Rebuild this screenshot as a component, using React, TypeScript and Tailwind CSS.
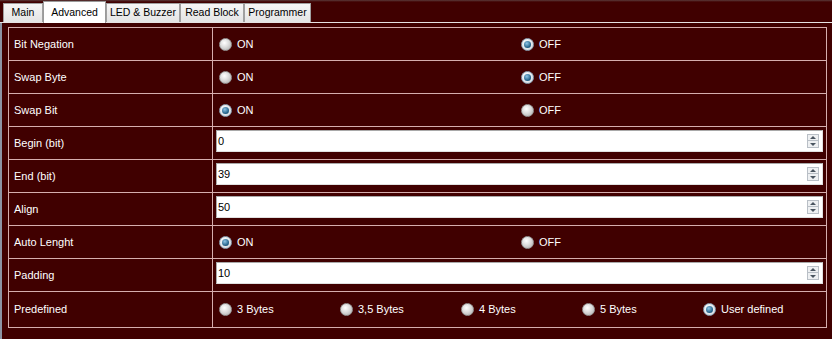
import React from 'react';

const tabs = [
  { name: 'Main', w: 'w-[40px]' },
  { name: 'Advanced', w: 'w-[63px]', active: true },
  { name: 'LED & Buzzer', w: 'w-[74px]' },
  { name: 'Read Block', w: 'w-[64px]' },
  { name: 'Programmer', w: 'w-[67px]' },
];

function Radio({ on }: { on?: boolean }) {
  if (on) {
    return (
      <span className="w-[13px] h-[13px] rounded-full shrink-0 flex items-center justify-center bg-[radial-gradient(circle_at_40%_35%,#ffffff,#c9d3dc)] border border-[#8ea2b4]">
        <span className="w-[7px] h-[7px] rounded-full bg-[radial-gradient(circle_at_40%_35%,#8cc4e6,#1b5a82_70%,#123e5c)]" />
      </span>
    );
  }
  return (
    <span className="w-[13px] h-[13px] rounded-full shrink-0 bg-[radial-gradient(circle_at_40%_35%,#ffffff,#dcdcdc_45%,#a9a9a9)] border border-[#9a9a9a]" />
  );
}

function Option({ label, on, w }: { label: string; on?: boolean; w: string }) {
  return (
    <div className={`flex items-center gap-[5px] ${w}`}>
      <Radio on={on} />
      <span className="text-white">{label}</span>
    </div>
  );
}

function Spin({ value }: { value: string }) {
  return (
    <div className="self-start mt-[3px] ml-[3px] w-[607px] h-[22px] bg-white border border-[#a9a9a9] border-r-[#e0e0e0] border-b-[#e0e0e0] flex items-center justify-between">
      <span className="pl-[1px] text-black">{value}</span>
      <div className="mr-[3px] flex flex-col">
        <div className="w-[12px] h-[7px] bg-[#eef0f2] border border-[#b9bfc6] flex items-center justify-center">
          <span className="w-0 h-0 border-l-[3px] border-r-[3px] border-b-[3px] border-l-transparent border-r-transparent border-b-[#4a5560]" />
        </div>
        <div className="w-[12px] h-[7px] bg-[#eef0f2] border border-[#b9bfc6] border-t-0 flex items-center justify-center">
          <span className="w-0 h-0 border-l-[3px] border-r-[3px] border-t-[3px] border-l-transparent border-r-transparent border-t-[#4a5560]" />
        </div>
      </div>
    </div>
  );
}

function OnOff({ on }: { on: boolean }) {
  return (
    <div className="flex items-center pl-[6px]">
      <Option label="ON" on={on} w="w-[302px]" />
      <Option label="OFF" on={!on} w="w-[302px]" />
    </div>
  );
}

const rows: { label: string; node: React.ReactNode; tall?: boolean }[] = [
  { label: 'Bit Negation', node: <OnOff on={false} /> },
  { label: 'Swap Byte', node: <OnOff on={false} /> },
  { label: 'Swap Bit', node: <OnOff on={true} /> },
  { label: 'Begin (bit)', node: <Spin value="0" /> },
  { label: 'End (bit)', node: <Spin value="39" /> },
  { label: 'Align', node: <Spin value="50" /> },
  { label: 'Auto Lenght', node: <OnOff on={true} /> },
  { label: 'Padding', node: <Spin value="10" /> },
  {
    label: 'Predefined',
    tall: true,
    node: (
      <div className="flex items-center pl-[6px]">
        <Option label="3 Bytes" w="w-[121px]" />
        <Option label="3,5 Bytes" w="w-[121px]" />
        <Option label="4 Bytes" w="w-[121px]" />
        <Option label="5 Bytes" w="w-[121px]" />
        <Option label="User defined" on w="w-[121px]" />
      </div>
    ),
  },
];

export default function App() {
  return (
    <div className="w-[832px] h-[339px] bg-[#400000] font-['Liberation_Sans',Arial,sans-serif] text-[11px] overflow-hidden flex flex-col">
      <div className="h-[23px] flex items-end pl-[3px] border-b border-[#e6e2e2] bg-[linear-gradient(#5a3a3a_0px,#400000_2px)] text-[10.5px]">
        {tabs.map((t) =>
          t.active ? (
            <div
              key={t.name}
              className={`${t.w} h-[22px] -mb-[1px] bg-white border border-b-0 border-[#9a9a9a] flex justify-center pt-[3px] text-black relative z-10`}
            >
              {t.name}
            </div>
          ) : (
            <div
              key={t.name}
              className={`${t.w} h-[19px] bg-[linear-gradient(#f6f6f6,#e4e4e4)] border border-b-0 border-[#a0a0a0] flex items-center justify-center text-black`}
            >
              {t.name}
            </div>
          )
        )}
      </div>
      <div className="flex-1 flex border-l-2 border-[#8c94a4] pl-[6px] pt-[4px]">
        <div className="w-[819px] self-start border-t border-l border-r border-[#d6aeae]">
          {rows.map((r) => (
            <div key={r.label} className={`flex border-b border-[#d6aeae] ${r.tall ? 'h-[36px]' : 'h-[33px]'}`}>
              <div className="w-[204px] shrink-0 border-r border-[#d6aeae] flex items-center pl-[5px] text-white">
                {r.label}
              </div>
              <div className="flex-1 flex items-center">{r.node}</div>
            </div>
          ))}
        </div>
      </div>
    </div>
  );
}
